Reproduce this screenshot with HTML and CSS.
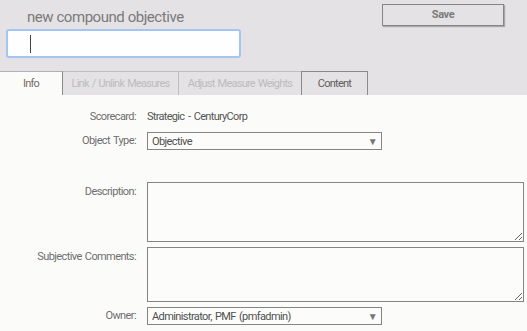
FILE: index.html
```html
<!DOCTYPE html>
<html>
<head>
<meta charset="utf-8">
<link rel="stylesheet" href="styles.css">
</head>
<body>
<div class="page">
  <header class="header">
    <div class="title-block">
      <div class="title">new compound objective</div>
      <div class="name-input"><span class="caret"></span></div>
    </div>
    <button class="save">Save</button>
  </header>
  <nav class="tabs">
    <div class="tab active">Info</div>
    <div class="tab disabled">Link / Unlink Measures</div>
    <div class="tab disabled">Adjust Measure Weights</div>
    <div class="tab normal">Content</div>
  </nav>
  <main class="content">
    <div class="row r-score">
      <div class="label">Scorecard:</div>
      <div class="value">Strategic - CenturyCorp</div>
    </div>
    <div class="row r-type">
      <div class="label">Object Type:</div>
      <div class="select"><span>Objective</span><span class="arrow">▼</span></div>
    </div>
    <div class="row r-desc">
      <div class="label label-top">Description:</div>
      <textarea class="area desc"></textarea>
    </div>
    <div class="row r-subj">
      <div class="label label-top">Subjective Comments:</div>
      <textarea class="area subj"></textarea>
    </div>
    <div class="row r-owner">
      <div class="label">Owner:</div>
      <div class="select"><span>Administrator, PMF (pmfadmin)</span><span class="arrow">▼</span></div>
    </div>
  </main>
</div>
</body>
</html>
```

FILE: styles.css
```css
html, body {
  margin: 0;
  padding: 0;
}
body {
  background: #fbfcfa;
  font-family: Roboto, "Liberation Sans", sans-serif;
  width: 527px;
  height: 331px;
  overflow: hidden;
}
.page {
  display: flex;
  flex-direction: column;
}
.header {
  background: #e4e2e4;
  height: 71px;
  display: flex;
  justify-content: space-between;
  align-items: flex-start;
}
.title-block {
  padding-left: 6px;
  padding-top: 8px;
}
.title {
  font-size: 15px;
  line-height: 18px;
  color: #7a7a7a;
  padding-left: 21px;
  height: 21px;
  letter-spacing: -0.45px;
}
.name-input {
  box-sizing: border-box;
  width: 235px;
  height: 29px;
  border: 2px solid #a3c5f3;
  border-radius: 3px;
  background: #fefefe;
  display: flex;
  align-items: center;
  padding-left: 22px;
}
.caret {
  display: block;
  width: 1px;
  height: 18px;
  background: #444;
}
.save {
  box-sizing: border-box;
  margin: 4px 23px 0 0;
  width: 122px;
  height: 22px;
  border: 1px solid #858585;
  background: #e4e2e4;
  box-shadow: 1px 1px 1px #a8a8a8;
  font-family: Roboto, "Liberation Sans", sans-serif;
  font-weight: bold;
  font-size: 11px;
  letter-spacing: -0.4px;
  color: #7b7b7b;
  padding: 0 0 1px 0;
}
.tabs {
  background: #e4e2e4;
  height: 24px;
  display: flex;
}
.tab {
  box-sizing: border-box;
  height: 24px;
  font-size: 11px;
  letter-spacing: -0.75px;
  word-spacing: 1px;
  display: flex;
  align-items: center;
  justify-content: center;
  border-top: 1px solid #b4b4b4;
  border-right: 1px solid #b4b4b4;
}
.tab.active {
  width: 63px;
  background: #fbfcfa;
  color: #7a6a66;
  border-top-color: #b0b0b0;
  border-right-color: #8a8a8a;
}
.tab.disabled {
  color: #bcbcbc;
  border-top-color: #bebebe;
  border-right-color: #bebebe;
}
.tab.disabled:nth-child(2) { width: 116px; }
.tab.disabled:nth-child(3) { width: 123px; }
.tab.normal {
  width: 67px;
  color: #5f5f5f;
  border-top-color: #8a8a8a;
  border-right-color: #8a8a8a;
  border-left: 1px solid #8a8a8a;
  margin-left: -1px;
}
.content {
  display: flex;
  flex-direction: column;
  padding-top: 13px;
}
.row {
  display: flex;
  gap: 11px;
}
.label {
  flex: 0 0 136px;
  text-align: right;
  font-size: 11px;
  letter-spacing: -0.6px;
  word-spacing: 1px;
  color: #6e6e6e;
  line-height: 18px;
}
.label-top {
  padding-top: 1px;
}
.value {
  font-size: 11px;
  letter-spacing: -0.7px;
  word-spacing: 1.5px;
  line-height: 18px;
  color: #555;
}
.r-type { margin-top: 6px; }
.r-desc { margin-top: 32px; }
.r-subj { margin-top: 5px; }
.r-owner { margin-top: 5px; }
.select {
  box-sizing: border-box;
  flex: 0 0 235px;
  height: 18px;
  border: 1px solid #858585;
  background: #fcfdfb;
  font-size: 11px;
  letter-spacing: -0.6px;
  word-spacing: 1px;
  color: #4f4f4f;
  display: flex;
  align-items: center;
  justify-content: space-between;
  padding: 0 4px 0 4px;
}
.arrow {
  font-size: 10px;
  color: #777;
}
.area {
  box-sizing: border-box;
  flex: 0 0 377px;
  margin: 0;
  border: 1px solid #858585;
  background: #fcfdfb;
  padding: 2px;
  font-family: Roboto, "Liberation Sans", sans-serif;
  font-size: 11px;
}
.area.desc { height: 60px; }
.area.subj { height: 55px; }
```
